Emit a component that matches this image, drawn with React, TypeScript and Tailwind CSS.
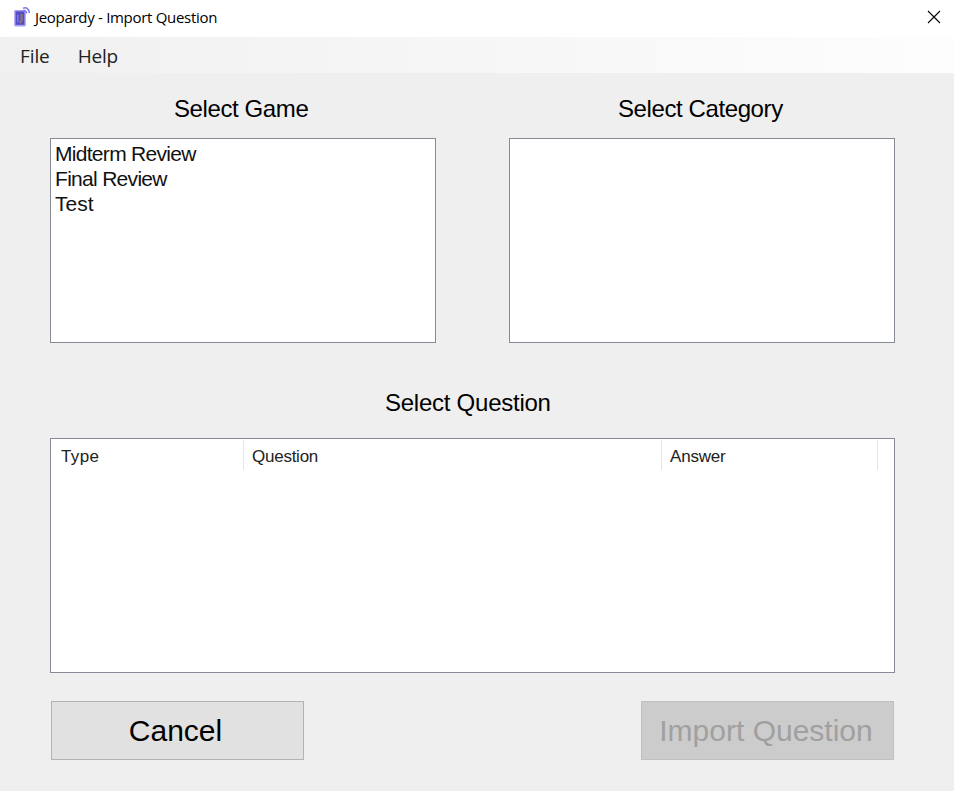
import React from "react";

const games = [
  { name: "Midterm Review", tracking: "tracking-[-0.7px]" },
  { name: "Final Review", tracking: "tracking-[-0.7px]" },
  { name: "Test", tracking: "tracking-[0px]" },
];

function AppIcon() {
  return (
    <svg width="18" height="22" viewBox="0 0 18 22" className="shrink-0">
      <rect x="1.2" y="4" width="11.6" height="16.6" rx="1.4" fill="#a79ff8" />
      <rect x="2.6" y="5.4" width="8.8" height="13.4" fill="#554bc4" />
      <path d="M4 8.5h1.6v8H4z" fill="#7b74e6" />
      <path d="M8.6 8v6.4l-2 2.8" stroke="#887970" strokeWidth="2.2" fill="none" />
      <path d="M10 2.4c3-2 6 .4 6.4 4.6M10 5c1.8-1 3.4.2 3.8 2.4" stroke="#7d74f0" strokeWidth="1.5" fill="none" />
    </svg>
  );
}

function Heading({ children, className }: { children: React.ReactNode; className: string }) {
  return <h2 className={`whitespace-nowrap text-[24px] leading-7 text-black ${className}`}>{children}</h2>;
}

function ListBox({ items }: { items: { name: string; tracking: string }[] }) {
  return (
    <ul className="h-[205px] w-[386px] border border-[#868b94] bg-white pt-[2px] pl-1">
      {items.map((item) => (
        <li key={item.name} className={`h-[25px] text-[21px] leading-[25px] text-[#111] ${item.tracking}`}>
          {item.name}
        </li>
      ))}
    </ul>
  );
}

export default function App() {
  return (
    <div className="flex h-[791px] w-[954px] flex-col overflow-hidden bg-[#efefef] font-['Liberation_Sans',Arial,sans-serif]">
      <header className="flex h-[37px] shrink-0 items-center bg-white pr-[13px] pb-[3px] pl-[13px]">
        <AppIcon />
        <h1 className="ml-1 text-[15px] leading-5 text-black font-['Open_Sans','Noto_Sans',sans-serif] tracking-[-0.3px]">
          Jeopardy - Import Question
        </h1>
        <button className="ml-auto" aria-label="Close">
          <svg width="14" height="14" viewBox="0 0 14 14">
            <path d="M1 1l12 12M13 1L1 13" stroke="#000" strokeWidth="1.1" />
          </svg>
        </button>
      </header>
      <nav className="flex h-9 shrink-0 items-center gap-7 bg-linear-to-r from-[#f0f0f0] to-[#fdfdfd] pt-[2px] pl-5 text-[19px] text-[#222] font-['Open_Sans','Noto_Sans',sans-serif]">
        <span className="tracking-[-0.1px]">File</span>
        <span className="tracking-[-0.2px]">Help</span>
      </nav>
      <main className="px-[50px] pt-[22px]">
        <div className="flex gap-[73px]">
          <section>
            <Heading className="pl-[124px] tracking-[-0.4px]">Select Game</Heading>
            <div className="pt-[15px]">
              <ListBox items={games} />
            </div>
          </section>
          <section>
            <Heading className="pl-[109px] tracking-[-0.4px]">Select Category</Heading>
            <div className="pt-[15px]">
              <ListBox items={[]} />
            </div>
          </section>
        </div>
        <section className="pt-[46px]">
          <Heading className="pl-[335px] tracking-[-0.25px]">Select Question</Heading>
          <div className="mt-[21px] h-[235px] w-[845px] border border-[#868b94] bg-white">
            <div className="flex h-[31px] pt-px text-[17px] leading-[33px] text-[#222]">
              <div className="w-[193px] border-r border-[#e5e5e5] pl-[10px] tracking-[0.4px]">Type</div>
              <div className="w-[418px] border-r border-[#e5e5e5] pl-[8px] tracking-[-0.25px]">Question</div>
              <div className="w-[216px] border-r border-[#e5e5e5] pl-[8px] tracking-[-0.2px]">Answer</div>
            </div>
          </div>
        </section>
        <div className="mt-[28px] flex justify-between pr-[10px] pl-px">
          <button className="h-[59px] w-[253px] border border-[#b3b3b3] bg-[#e1e1e1] pr-1 text-[30px] text-black">
            Cancel
          </button>
          <button className="h-[59px] w-[253px] border border-[#c0c0c0] bg-[#cccccc] pr-[3px] text-[30px] whitespace-nowrap text-[#a0a0a0]" disabled>
            Import Question
          </button>
        </div>
      </main>
    </div>
  );
}
